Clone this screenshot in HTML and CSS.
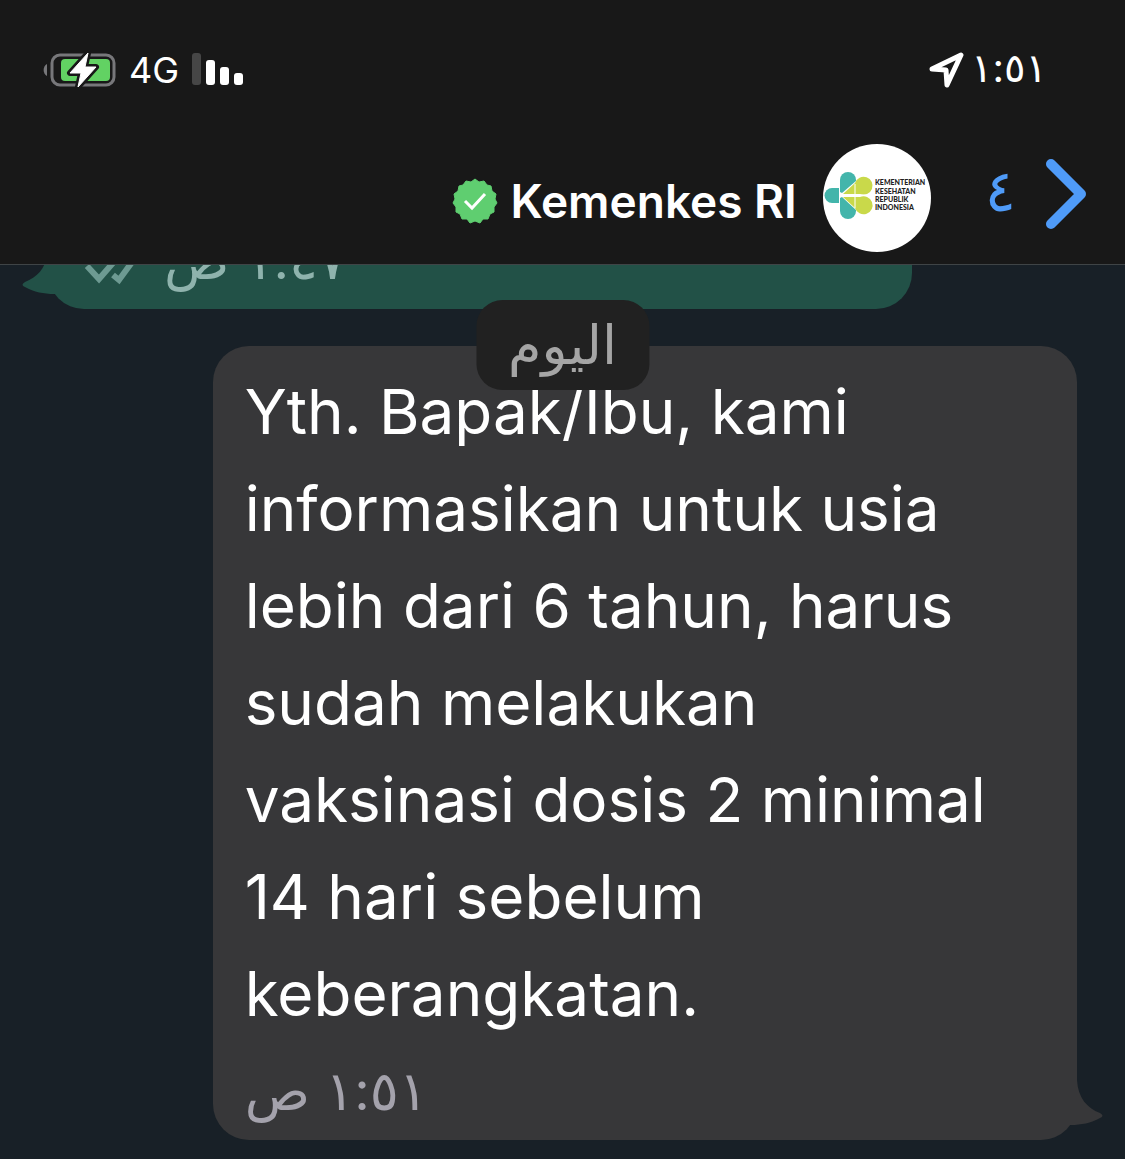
FILE: index.html
```html
<!DOCTYPE html>
<html lang="ar" dir="rtl">
<head>
    <meta charset="UTF-8">
    <meta name="viewport" content="width=device-width, initial-scale=1.0">
    <title>Kemenkes RI</title>
    <link rel="stylesheet" href="styles.css">
</head>
<body>
    <header class="top">
        <div class="status-bar">
            <div class="status-time">
                <span>١:٥١</span>
                <svg width="36" height="36" viewBox="0 0 36 36">
                    <path d="M3 17 L32 3 L18 33 L17 18 Z" fill="none" stroke="#fff" stroke-width="5" stroke-linejoin="round"/>
                </svg>
            </div>
            <div class="status-icons">
                <svg width="52" height="34" viewBox="0 0 52 34">
                    <rect x="0" y="0" width="9" height="32" rx="3" fill="#464646"/>
                    <rect x="14" y="7" width="9" height="25" rx="3" fill="#fff"/>
                    <rect x="28" y="14" width="9" height="18" rx="3" fill="#fff"/>
                    <rect x="42" y="20" width="9" height="12" rx="3" fill="#fff"/>
                </svg>
                <span class="network">4G</span>
                <svg width="73" height="38" viewBox="0 0 73 38">
                    <path d="M4 13 A7 7 0 0 0 4 25 Z" fill="#77777a"/>
                    <rect x="9" y="4" width="62" height="30" rx="8" fill="none" stroke="#77777a" stroke-width="3"/>
                    <rect x="18" y="8" width="49" height="22" rx="4" fill="#62d263"/>
                    <path d="M45 2 L27 22 H38 L35 36 L53 16 H42 Z" fill="#fff" stroke="#181818" stroke-width="6" stroke-linejoin="round"/>
                    <path d="M45 2 L27 22 H38 L35 36 L53 16 H42 Z" fill="#fff" stroke="#fff" stroke-width="1" stroke-linejoin="round"/>
                </svg>
            </div>
        </div>
        <div class="chat-title">
            <a class="back" href="#" aria-label="رجوع">
                <svg width="42" height="72" viewBox="0 0 42 72">
                    <path d="M6 6 L36 36 L6 66" fill="none" stroke="#4f9bf8" stroke-width="10" stroke-linecap="round" stroke-linejoin="round"/>
                </svg>
                <span>٤</span>
            </a>
            <svg class="avatar" viewBox="0 0 108 108">
                <circle cx="54" cy="54" r="54" fill="#fff"/>
                <!-- logo petals -->
                <g fill="#43b5ab">
                    <path d="M17 48 V36 A8 8 0 0 1 33 36 V37 L19 49 Z"/>
                    <path d="M17 54 V67 A8 8 0 0 0 33 67 V66 L19 53 Z"/>
                    <path d="M16 44 V59 H9 A7 7 0 0 1 9 44 Z"/>
                </g>
                <g fill="#c9d94a">
                    <path d="M32 50 H20 L32 39 A9 9 0 1 1 37 50 Z"/>
                    <path d="M32 53 H20 L32 64 A9 9 0 1 0 37 53 Z"/>
                </g>
                <path d="M32 40 V64 M18 51 H44" stroke="#fff" stroke-width="1"/>
                <g class="logo-text" direction="ltr">
                    <text x="52" y="41">KEMENTERIAN</text>
                    <text x="52" y="50">KESEHATAN</text>
                    <text x="52" y="58">REPUBLIK</text>
                    <text x="52" y="66">INDONESIA</text>
                </g>
            </svg>
            <div class="contact" dir="ltr">
                <svg width="46" height="46" viewBox="-23 -23 46 46">
                    <polygon fill="#5fce70" stroke="#5fce70" stroke-width="1" stroke-linejoin="round" points="0,-22 4,-19 9,-20 12,-16 16,-15 17,-10 21,-7 20,-2 22,2 19,6 19,11 15,13 13,18 8,18 5,22 0,20 -5,22 -8,18 -13,18 -15,13 -19,11 -19,6 -22,2 -20,-2 -21,-7 -17,-10 -16,-15 -12,-16 -9,-20 -4,-19"/>
                    <path d="M-10 0 L-3 7 L10 -7" fill="none" stroke="#fff" stroke-width="3"/>
                </svg>
                <h1>Kemenkes RI</h1>
            </div>
        </div>
    </header>

    <main class="chat">
        <div class="date">اليوم</div>

        <div class="bubble outgoing">
            <div class="meta">
                <time>١:٤٧ ص</time>
                <svg class="read" width="52" height="30" viewBox="0 0 52 30">
                    <path d="M3 11 L15 24 L35 1 M29 20 L35 25 L51 3" fill="none" stroke="#6d9a92" stroke-width="6"/>
                </svg>
            </div>
            <svg class="tail" width="56" height="46" viewBox="0 0 56 46">
                <path d="M30 0 C31 18 40 28 53 33 Q58 36 53 38 C44 43 34 45 24 45 H0 V0 Z" fill="#225147"/>
            </svg>
        </div>

        <div class="bubble incoming">
            <p lang="id" dir="ltr">Yth. Bapak/Ibu, kami informasikan untuk usia lebih dari 6 tahun, harus sudah melakukan vaksinasi dosis 2 minimal 14 hari sebelum keberangkatan.</p>
            <div class="meta">
                <time>١:٥١ ص</time>
            </div>
            <svg class="tail" width="56" height="46" viewBox="0 0 56 46">
                <path d="M30 0 C31 18 40 28 53 33 Q58 36 53 38 C44 43 34 45 24 45 H0 V0 Z" fill="#373739"/>
            </svg>
        </div>
    </main>
</body>
</html>
```

FILE: styles.css
```css
*{
    box-sizing: border-box;
}

body{
    margin: 0;
    min-height: 100vh;
    display: flex;
    flex-direction: column;
    background: #182027;
    color: white;
    font-family: Inter, "DejaVu Sans", sans-serif;
}

svg{
    display: block;
    flex: none;
}

.top{
    position: relative;
    z-index: 5;
    background: #181818;
    border-bottom: 1px solid #3f4446;
}

.status-bar{
    display: flex;
    justify-content: space-between;
    align-items: center;
    height: 140px;
    padding: 0 78px 0 43px;
}

.status-time,
.status-icons{
    display: flex;
    align-items: center;
}

.status-time{
    gap: 6px;
    font-size: 40px;
}

.status-time span{
    padding-bottom: 6px;
}

.status-icons{
    gap: 13px;
    font-size: 36px;
}

.chat-title{
    display: flex;
    align-items: center;
    gap: 26px;
    padding: 4px 38px 12px;
}

.back{
    display: flex;
    align-items: center;
    gap: 29px;
    padding: 0 0 8px 28px;
    color: #4f9bf8;
    font-size: 58px;
    line-height: 72px;
    text-decoration: none;
}

.back span{
    padding-bottom: 8px;
}

.avatar{
    width: 108px;
    height: 108px;
}

.logo-text{
    font-family: Lato, sans-serif;
    font-size: 7px;
    font-weight: 900;
    fill: #222;
}

.contact{
    display: flex;
    align-items: center;
    gap: 12px;
    padding-top: 6px;
}

.contact h1{
    margin: 0;
    font-size: 46px;
    font-weight: 600;
}

/* the older message is scrolled under the header */
.chat{
    flex: 1;
    position: relative;
    margin-top: -60px;
    padding: 0 48px 19px;
}

.date{
    position: absolute;
    z-index: 2;
    top: 95px;
    left: 50%;
    transform: translateX(-50%);
    padding: 0 32px;
    border-radius: 26px;
    background: #212121;
    color: #a5a5a5;
    font-size: 54px;
    line-height: 90px;
}

.bubble{
    position: relative;
    width: 84%;
    border-radius: 36px;
}

.outgoing{
    margin-right: auto;
    padding: 18px 36px 12px;
    background: #225147;
}

.incoming{
    margin-top: 37px;
    padding: 17px 32px 0;
    background: #373739;
}

.incoming p{
    margin: 0;
    font-size: 62px;
    line-height: 97px;
    padding-right: 24px;
}

.meta{
    display: flex;
    justify-content: flex-end;
    align-items: center;
    gap: 28px;
    color: #8fb3ad;
    font-size: 54px;
    line-height: 74px;
}

.incoming .meta{
    color: #a4a2ac;
    line-height: 98px;
}

.read{
    margin-top: 20px;
}

.tail{
    position: absolute;
    right: -26px;
    bottom: 14px;
}

.outgoing .tail{
    right: auto;
    left: -26px;
    transform: scaleX(-1);
}
```
